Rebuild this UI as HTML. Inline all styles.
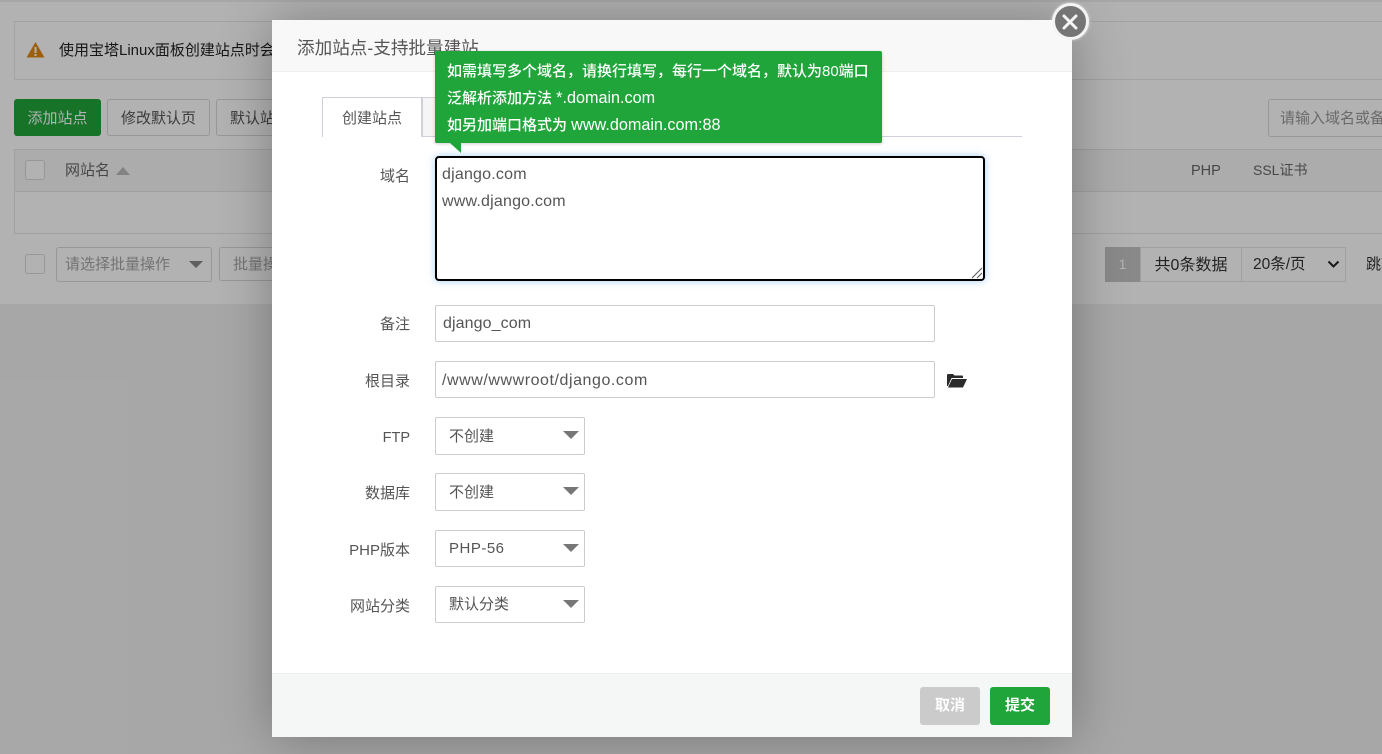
<!DOCTYPE html>
<html><head><meta charset="utf-8"><style>
*{box-sizing:border-box}
html,body{margin:0;padding:0;width:1382px;height:754px;overflow:hidden;background:#f0f0f0;font-family:"Liberation Sans","Noto Sans CJK SC",sans-serif;font-size:15px;color:#555}
.a{position:absolute;white-space:nowrap}
.b{border:1px solid #d8d8d8;border-radius:3px;background:#fff}
#ov{position:absolute;left:0;top:0;width:1382px;height:754px;background:rgba(0,0,0,.3)}
#m{position:absolute;left:272px;top:20px;width:800px;height:717px;background:#fff;box-shadow:1px 1px 50px rgba(0,0,0,.3)}
.l{position:absolute;right:972px;font-size:15px;color:#555;white-space:nowrap;line-height:20px}
.i{position:absolute;left:435px;width:500px;height:37px;border:1px solid #ccc;border-radius:2px;background:#fff;color:#555;font-size:16px;line-height:35px;padding-left:7px;white-space:nowrap}
.s{position:absolute;left:435px;width:150px;border:1px solid #ccc;border-radius:2px;background:#fff;color:#555;font-size:15px;padding-left:13px;white-space:nowrap}
.s:after{content:"";position:absolute;left:127px;top:13px;border-left:8px solid transparent;border-right:8px solid transparent;border-top:8px solid #777}
</style></head><body>
<div class="a" style="left:0;top:2px;width:1382px;height:302px;background:#fff"></div>
<div class="a" style="left:14px;top:21px;width:1368px;height:59px;border:1px solid #e8e8e8;border-right:0"></div>
<svg class="a" style="left:26px;top:41px" width="19" height="17" viewBox="0 0 19 17"><path d="M9.5 1L18.5 16.500H.5Z" fill="#e08a12"/><rect x="8.500" y="6" width="2" height="6" fill="#fff"/><rect x="8.500" y="13" width="2" height="2" fill="#fff"/></svg>
<div class="a" style="left:59px;top:41px;color:#222;font-size:15px;line-height:20px">使用宝塔Linux面板创建站点时会</div>
<div class="a" style="left:14px;top:99px;width:87px;height:37px;background:#20a53a;border-radius:3px;color:#fff;text-align:center;line-height:39px">添加站点</div>
<div class="a b" style="left:107px;top:99px;width:103px;height:37px;text-align:center;line-height:37px">修改默认页</div>
<div class="a b" style="left:216px;top:99px;width:103px;height:37px;padding-left:13px;line-height:37px">默认站点</div>
<div class="a b" style="left:1268px;top:99px;width:130px;height:38px;padding-left:11px;line-height:37px;color:#999">请输入域名或备注</div>
<div class="a" style="left:14px;top:149px;width:1368px;height:43px;background:#f6f6f6;border:1px solid #e6e6e6;border-right:0"></div>
<div class="a" style="left:14px;top:191px;width:1368px;height:43px;border:1px solid #e6e6e6;border-top:0;border-right:0"></div>
<div class="a b" style="left:25px;top:160px;width:20px;height:20px"></div>
<div class="a" style="left:65px;top:161px;line-height:20px;color:#666">网站名</div>
<div class="a" style="left:116px;top:167px;border-left:7px solid transparent;border-right:7px solid transparent;border-bottom:8px solid #bbb"></div>
<div class="a" style="left:1191px;top:161px;line-height:20px;color:#666;font-size:14.500px">PHP</div>
<div class="a" style="left:1253px;top:160px;line-height:20px;color:#666;font-size:14px">SSL证书</div>
<div class="a b" style="left:25px;top:254px;width:20px;height:20px"></div>
<div class="a b" style="left:56px;top:247px;width:156px;height:35px;padding-left:8px;line-height:34px;color:#a5a5a5">请选择批量操作</div>
<div class="a" style="left:189px;top:261px;border-left:7px solid transparent;border-right:7px solid transparent;border-top:7px solid #888"></div>
<div class="a b" style="left:219px;top:247px;width:100px;height:34px;padding-left:13px;line-height:33px;color:#a5a5a5">批量操作</div>
<div class="a" style="left:1105px;top:247px;width:35px;height:35px;background:#c4c4c4;color:#fff;text-align:center;line-height:35px;font-size:14px">1</div>
<div class="a" style="left:1140px;top:247px;width:102px;height:35px;border:1px solid #e6e6e6;text-align:center;line-height:35px;color:#333;font-size:16px">共0条数据</div>
<div class="a" style="left:1241px;top:247px;width:105px;height:35px;border:1px solid #e6e6e6;padding-left:11px;line-height:33px;color:#333;font-size:15.500px">20条/页</div>
<svg class="a" style="left:1327px;top:260px" width="13" height="9" viewBox="0 0 13 9"><path d="M1.500 1.500L6.500 6.500L11.500 1.500" fill="none" stroke="#222" stroke-width="2"/></svg>
<div class="a" style="left:1366px;top:255px;line-height:20px;color:#333">跳转</div>
<div id="ov"></div>
<div id="m">
<div class="a" style="left:0;top:0;width:800px;height:52px;background:#f8f8f8;border-bottom:1px solid #eee;padding-left:25px;line-height:56px;font-size:17.600px;color:#555">添加站点-支持批量建站</div>
<div class="a" style="left:0;top:653px;width:800px;height:64px;background:#f5f7f6;border-top:1px solid #eee"></div>
<div class="a" style="left:648px;top:667px;width:60px;height:38px;background:#cbcbcb;border-radius:3px;color:#fff;font-weight:bold;font-size:15px;text-align:center;line-height:37px">取消</div>
<div class="a" style="left:718px;top:667px;width:60px;height:38px;background:#20a53a;border-radius:3px;color:#fff;font-weight:bold;font-size:15px;text-align:center;line-height:37px">提交</div>
</div>
<div class="a" style="left:322px;width:700px;height:1px;background:#d0d0dc;top:136px"></div>
<div class="a" style="left:422px;top:97px;width:100px;height:40px;background:#f5f5f5;border:1px solid #d0d0dc"></div>
<div class="a" style="left:322px;top:97px;width:100px;height:40px;background:#fff;border:1px solid #d0d0dc;border-bottom:0;text-align:center;line-height:42px;font-size:15px;color:#555">创建站点</div>
<div class="l" style="top:167px">域名</div>
<div class="a" style="left:435px;top:156px;width:550px;height:125px;background:#fff;border:2px solid #000;border-radius:4px;box-shadow:0 0 8px rgba(102,175,233,.6);padding:3px 5px;font-size:16px;letter-spacing:.2px;line-height:27px;color:#555;white-space:pre">django.com
www.django.com</div>
<svg class="a" style="left:970px;top:266px" width="13" height="13" viewBox="0 0 13 13"><path d="M2 12L12 2M7 12L12 7" stroke="#555" stroke-width="1" fill="none"/></svg>
<div class="a" style="left:435px;top:52px;width:447px;height:91px;background:#20a53a;border-radius:2px;color:#fff;font-size:15px;font-weight:500;line-height:27px;padding:6px 12px"></div>
<div class="a" style="left:435px;top:51px;width:447px;height:92px;background:#20a53a;border-radius:2px;color:#fff;font-size:15px;font-weight:500;line-height:27px;padding:7px 12px 0;box-shadow:0 1px 3px rgba(0,0,0,.2)">如需填写多个域名，请换行填写，每行一个域名，默认为80端口<br>泛解析添加方法 <span style="font-size:16.200px">*.domain.com</span><br>如另加端口格式为 <span style="font-size:16.200px">www.domain.com:88</span></div>
<div class="a" style="left:450px;top:143px;width:11px;height:10px;background:#20a53a;clip-path:polygon(0 0,100% 0,100% 100%)"></div>
<div class="l" style="top:315px">备注</div>
<div class="i" style="top:305px;line-height:36px;padding-left:7px;letter-spacing:.1px">django_com</div>
<div class="l" style="top:372px">根目录</div>
<div class="i" style="top:361px;line-height:38px;padding-left:6px;letter-spacing:.56px">/www/wwwroot/django.com</div>
<svg class="a" style="left:947px;top:373px" width="20" height="15" viewBox="0 0 20 15"><path d="M0 2Q0 1 1 1H6L7.500 2.500H15Q16 2.500 16 3.500V5H4.500L1 13H0Z" fill="#2b2b2b"/><path d="M5 6H20L16 14.500H1Z" fill="#2b2b2b"/></svg>
<div class="l" style="top:428px;font-size:14.500px">FTP</div>
<div class="s" style="top:417px;height:38px;line-height:37px">不创建</div>
<div class="l" style="top:484px">数据库</div>
<div class="s" style="top:473px;height:38px;line-height:37px">不创建</div>
<div class="l" style="top:541px">PHP版本</div>
<div class="s" style="top:530px;height:37px;line-height:36px;letter-spacing:.5px">PHP-56</div>
<div class="l" style="top:597px">网站分类</div>
<div class="s" style="top:586px;height:37px;line-height:36px">默认分类</div>
<div class="a" style="left:1052px;top:3px;width:37px;height:37px;border-radius:50%;background:#757575;border:3px solid #f4f4f4;box-shadow:0 0 3px rgba(255,255,255,.6)"></div>
<svg class="a" style="left:1061px;top:13px" width="18" height="18" viewBox="0 0 18 18"><path d="M3 3L15 15M15 3L3 15" stroke="#f4f4f4" stroke-width="3" stroke-linecap="round"/></svg>
</body></html>
